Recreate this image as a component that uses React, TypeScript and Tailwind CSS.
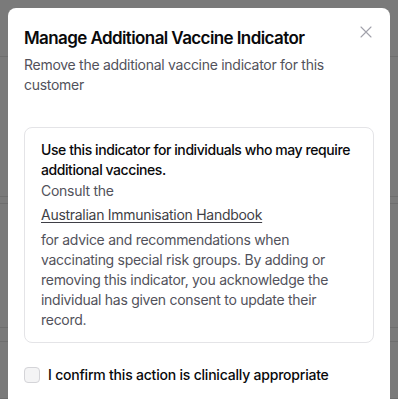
import { useState } from "react";

function CloseIcon() {
  return (
    <svg width="12" height="12" viewBox="0 0 12 12" fill="none" aria-hidden="true">
      <path d="M1 1L11 11M11 1L1 11" stroke="#a1a1aa" strokeWidth="1.1" strokeLinecap="round" />
    </svg>
  );
}

// Rows of the page that sits behind the dialog overlay; only their edges peek out.
const PAGE_ROWS = [57, 140, 7, 124, 14, 57];

export default function App() {
  const [confirmed, setConfirmed] = useState(false);

  return (
    <div
      className="relative h-[399px] w-[398px] overflow-hidden bg-white"
      style={{ fontFamily: "Inter, 'Noto Sans', sans-serif" }}
    >
      <div className="flex flex-col">
        {PAGE_ROWS.map((h, i) => (
          <div key={i} className="border-b border-[#e5e5e5]" style={{ height: h }} />
        ))}
      </div>

      {/* overlay */}
      <div className="absolute inset-0 bg-black/[0.52] px-2 pt-2">
        <div className="relative h-[420px] rounded-lg bg-white px-4 pt-4">
          <button
            type="button"
            aria-label="Close"
            className="absolute right-[18px] top-[18px] grid h-3 w-3 place-items-center"
          >
            <CloseIcon />
          </button>

          <h2 className="text-[17px] font-semibold leading-7 tracking-[-0.035em] text-[#09090b]">
            Manage Additional Vaccine Indicator
          </h2>
          <p className="mt-[3px] pr-6 text-sm leading-5 tracking-[-0.02em] text-[#52525b]">
            Remove the additional vaccine indicator for this customer
          </p>

          <div className="mt-8 flex flex-col rounded-lg border border-[#e4e4e7] px-4 py-3 text-sm leading-5 tracking-[-0.02em]">
            <p className="font-medium tracking-[-0.03em] text-[#09090b]">
              Use this indicator for individuals who may require additional vaccines.
            </p>
            <p className="mt-px text-[#52525b]">Consult the</p>
            <a href="#" className="mt-1 text-[#3f3f46] underline underline-offset-2">
              Australian Immunisation Handbook
            </a>
            <p className="mt-[5px] text-[#52525b]">
              for advice and recommendations when vaccinating special risk groups. By adding or
              removing this indicator, you acknowledge the individual has given consent to update
              their record.
            </p>
          </div>

          <label className="mt-[22px] flex items-center gap-2">
            <input
              type="checkbox"
              checked={confirmed}
              onChange={(e) => setConfirmed(e.target.checked)}
              className="h-4 w-4 appearance-none rounded-[4px] border border-[#d4d4d8] bg-[#f4f4f5]"
            />
            <span className="text-sm font-medium leading-5 tracking-[-0.015em] text-[#09090b]">
              I confirm this action is clinically appropriate
            </span>
          </label>
        </div>
      </div>
    </div>
  );
}
